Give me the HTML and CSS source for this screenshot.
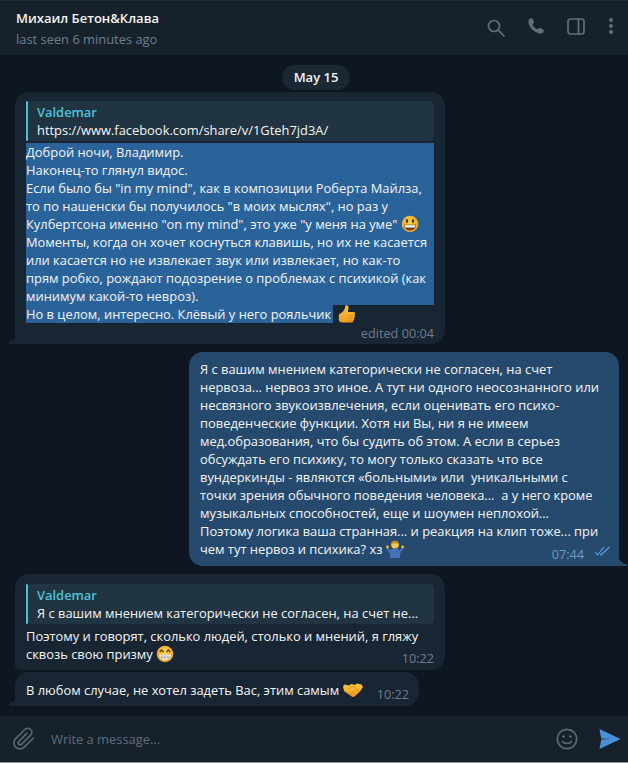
FILE: index.html
```html
<!DOCTYPE html>
<html lang="en">

<head>
    <meta charset="UTF-8">
    <meta name="viewport" content="width=device-width, initial-scale=1.0">
    <title>Михаил Бетон&amp;Клава</title>
    <link rel="stylesheet" href="styles.css">
</head>

<body>
    <svg class="defs" width="0" height="0">
        <defs>
            <radialGradient id="faceYellow" cx="50%" cy="40%" r="60%">
                <stop offset="0" stop-color="#fbd750"/>
                <stop offset="1" stop-color="#ec9c22"/>
            </radialGradient>
            <linearGradient id="handYellow" x1="0" y1="0" x2="0" y2="1">
                <stop offset="0" stop-color="#fcc93f"/>
                <stop offset="1" stop-color="#ee9a1e"/>
            </linearGradient>
        </defs>
    </svg>
    <div class="app">
        <header class="topBar">
            <div class="peer">
                <div class="peerName">Михаил Бетон&amp;Клава</div>
                <div class="peerStatus">last seen 6 minutes ago</div>
            </div>
            <div class="topIcons">
                <svg class="icon" width="24" height="24" viewBox="0 0 24 24"><circle cx="10" cy="10" r="5.500"/><path d="M14.200 14.200l5.800 5.800"/></svg>
                <svg class="icon fill" width="24" height="24" viewBox="0 0 24 24"><path d="M6 2.500c1.100-.7 2.300-.3 2.800.8l1 2.300c.3.700.1 1.400-.4 1.900l-1 1c.8 2 2.500 3.800 4.700 4.800l1.100-.9c.6-.5 1.300-.6 2-.3l2.500 1.100c1.100.5 1.400 1.800.7 2.700-.9 1.300-2.500 2-4.100 1.600C10.300 16.300 5.800 12 4.600 7.300 4.200 5.300 4.700 3.500 6 2.500z"/></svg>
                <svg class="icon" width="24" height="24" viewBox="0 0 24 24"><rect x="4" y="3" width="16" height="15" rx="2.500"/><path d="M14.500 3v15"/></svg>
                <svg class="icon fill dots" width="8" height="24" viewBox="0 0 8 24"><circle cx="4" cy="4" r="2"/><circle cx="4" cy="10" r="2"/><circle cx="4" cy="16" r="2"/></svg>
            </div>
        </header>

        <main class="history">
            <div class="dateRow"><span class="datePill">May 15</span></div>

            <div class="msg in tail first">
                <div class="reply">
                    <div class="replyName">Valdemar</div>
                    <div class="replyText">https://www.facebook.com/share/v/1Gteh7jd3A/</div>
                </div>
                <div class="msgText selBlock">Доброй ночи, Владимир.
Наконец-то глянул видос.
Если было бы "in my mind", как в композиции Роберта Майлза,
то по нашенски бы получилось "в моих мыслях", но раз у
Кулбертсона именно "on my mind", это уже "у меня на уме" <svg class="emoji" viewBox="0 0 18 18"><circle cx="9" cy="9" r="8.300" fill="url(#faceYellow)"/><ellipse cx="6" cy="6" rx="1.200" ry="1.900" fill="#5b3a12"/><ellipse cx="12" cy="6" rx="1.200" ry="1.900" fill="#5b3a12"/><path d="M3 9.800h12c0 3.600-2.700 5.600-6 5.600s-6-2-6-5.600z" fill="#6b3f14"/><path d="M3.500 10.200h11l-.6 2.200H4.100z" fill="#fff"/></svg>
Моменты, когда он хочет коснуться клавишь, но их не касается
или касается но не извлекает звук или извлекает, но как-то
прям робко, рождают подозрение о проблемах с психикой (как
минимум какой-то невроз).</div>
                <div class="msgLine"><span class="sel">Но в целом, интересно. Клёвый у него рояльчик</span><svg class="emoji thumb" viewBox="0 0 18 18"><path d="M7.500 .5c1.400-.5 3 .3 3 2.200 0 1.500-.4 2.800-.7 4.300h5.500c2 0 2.300 2.300 1 3 .9.700.8 2.200-.2 2.700.6.900.2 2.100-.8 2.400.3 1.200-.4 2.400-1.800 2.400H4.500C2 17.500.8 16.500.8 14.500v-3.300c0-2 1-2.800 2.400-3.300 2.300-1.200 4-4 4.300-7.400z" fill="url(#handYellow)"/><path d="M10 10.500h5M10 13h5M10 15.500h4" stroke="#d98a17" stroke-width=".7"/></svg></div>
                <div class="msgFoot"><span class="msgMeta">edited 00:04</span></div>
            </div>

            <div class="msg out">
                <div class="msgText">Я с вашим мнением категорически не согласен, на счет
нервоза... нервоз это иное. А тут ни одного неосознанного или
несвязного звукоизвлечения, если оценивать его психо-
поведенческие функции. Хотя ни Вы, ни я не имеем
мед.образования, что бы судить об этом. А если в серьез
обсуждать его психику, то могу только сказать что все
вундеркинды - являются «больными» или  уникальными с
точки зрения обычного поведения человека...  а у него кроме
музыкальных способностей, еще и шоумен неплохой...
Поэтому логика ваша странная... и реакция на клип тоже... при</div>
                <div class="msgFoot">
                    <span class="msgText">чем тут нервоз и психика? хз <svg class="emoji" viewBox="0 0 18 18"><path d="M4 18v-6c0-2 1.500-3.500 5-3.500s5 1.500 5 3.500v6z" fill="#4272b8"/><path d="M1.500 7.500l3.500 3.500-1 2.500L.5 9zM16.500 7.500L13 11l1 2.500L17.500 9z" fill="#4272b8"/><circle cx="1.400" cy="7" r="1.400" fill="#f5be3c"/><circle cx="16.600" cy="7" r="1.400" fill="#f5be3c"/><circle cx="9" cy="4.800" r="3.800" fill="#f8c93f"/><path d="M5.200 4.300C5.200-.6 12.800-.6 12.800 4.300c-2.200-1.300-5.400-1.300-7.600 0z" fill="#c98f1c"/></svg></span>
                    <span class="msgMeta">07:44<svg class="checks" width="18" height="12" viewBox="0 0 18 12"><path d="M1 7l2.500 3L10 2M6 9l1 1L15.500 2"/></svg></span>
                </div>
            </div>

            <div class="msg in second">
                <div class="reply">
                    <div class="replyName">Valdemar</div>
                    <div class="replyText">Я с вашим мнением категорически не согласен, на счет не...</div>
                </div>
                <div class="msgText">Поэтому и говорят, сколько людей, столько и мнений, я гляжу</div>
                <div class="msgFoot">
                    <span class="msgText">сквозь свою призму <svg class="emoji" viewBox="0 0 18 18"><circle cx="9" cy="9" r="8.300" fill="url(#faceYellow)"/><path d="M3.700 7.200l2-2.200 2 2.200M10.300 7.200l2-2.200 2 2.200" fill="none" stroke="#5b3a12" stroke-width="1.200"/><path d="M3 9.500h12c0 3.800-2.700 5.800-6 5.800s-6-2-6-5.800z" fill="#f1f1ee"/><path d="M3.200 12.200h11.600M6 9.500v5.200M9 9.500v5.800M12 9.500v5.200" stroke="#9a8d7c" stroke-width=".6"/></svg></span>
                    <span class="msgMeta">10:22</span>
                </div>
            </div>

            <div class="msg in tail last">
                <div class="msgFoot">
                    <span class="msgText">В любом случае, не хотел задеть Вас, этим самым <svg class="emoji shake" viewBox="0 0 20 14"><path d="M0 3.500l1.500-2L6 2.500 8.500 1 12 2l2-1.500 4.500 1L20 4l-3 4.500-5.500 5-2 .5-5-3.500L1 8z" fill="url(#handYellow)"/><path d="M6 6l3-2.500 2.500.5 4 4.500M9 8l2.500 2.500M7 10l2 2" fill="none" stroke="#cf8412" stroke-width=".8"/></svg></span>
                    <span class="msgMeta">10:22</span>
                </div>
            </div>
        </main>

        <footer class="inputBar">
            <svg class="icon attach" width="24" height="24" viewBox="0 0 24 24"><path d="M21.400 11l-9.200 9.200a6 6 0 0 1-8.500-8.500l9.200-9.200a4 4 0 0 1 5.700 5.700l-9.200 9.200a2 2 0 0 1-2.800-2.800l8.500-8.500"/></svg>
            <div class="inputText">Write a message...</div>
            <svg class="icon" width="24" height="24" viewBox="0 0 24 24"><circle cx="12" cy="12" r="9.700"/><circle class="dot" cx="8.500" cy="9.500" r="1.200"/><circle class="dot" cx="15.500" cy="9.500" r="1.200"/><path d="M7.500 14.500c1.500 2.600 7.500 2.600 9 0"/></svg>
            <svg class="send" width="24" height="24" viewBox="0 0 24 24"><path d="M1.500 2l21 10-21 10 1.700-9.400L13 12 3.200 11.400z"/></svg>
        </footer>
    </div>
</body>

</html>
```

FILE: styles.css
```css
* {
    box-sizing: border-box;
}

html,
body {
    margin: 0;
    padding: 0;
    background: #0e1621;
}

.defs {
    display: block;
    height: 0;
}

.app {
    width: 628px;
    height: 763px;
    display: flex;
    flex-direction: column;
    overflow: hidden;
    font-family: "Open Sans", sans-serif;
    font-size: 12.900px;
    line-height: 18px;
    color: #f5f5f5;
    border-top: 1px solid #232c3a;
    border-bottom: 1px solid #8a8f96;
}

.topBar {
    height: 54px;
    flex: none;
    display: flex;
    align-items: center;
    justify-content: space-between;
    padding: 0 13px 0 16px;
    background: #17212b;
}

.peerName {
    font-size: 13px;
    font-weight: 600;
    line-height: 18px;
}

.peerStatus {
    margin-top: 3px;
    color: #6d7f8f;
    line-height: 18px;
}

.topIcons {
    display: flex;
    align-items: center;
    gap: 16px;
}

.dots {
    margin-left: 3px;
}

.icon {
    flex: none;
    fill: none;
    stroke: #626f7b;
    stroke-width: 1.700;
    stroke-linecap: round;
    stroke-linejoin: round;
}

.icon.fill {
    fill: #626f7b;
    stroke: none;
}

.icon .dot {
    fill: #626f7b;
    stroke: none;
}

.history {
    flex: 1;
    padding: 10px 0 0;
    display: flex;
    flex-direction: column;
}

.dateRow {
    display: flex;
    justify-content: center;
    height: 27px;
    padding-left: 4px;
}

.datePill {
    height: 25px;
    padding: 0 12px;
    border-radius: 13px;
    background: #1b2733;
    font-weight: 600;
    font-size: 13px;
    line-height: 25px;
}

.msg {
    position: relative;
    padding: 9px 11px 3px;
    border-radius: 14px;
    background: #182533;
}

.msg.in {
    margin-left: 15px;
    align-self: flex-start;
    width: 430px;
}

.msg.out {
    margin-left: 189px;
    margin-top: 8px;
    width: 430px;
    padding-top: 8px;
    padding-bottom: 8px;
    padding-right: 7px;
    background: #264a6e;
    border-bottom-right-radius: 0;
}

.msg.out::after {
    content: "";
    position: absolute;
    right: -8px;
    bottom: 0;
    width: 8px;
    height: 10px;
    background: radial-gradient(circle at 100% 0, transparent 8px, #264a6e 8.500px);
}

.msg.tail {
    border-bottom-left-radius: 0;
}

.msg.tail::after {
    content: "";
    position: absolute;
    left: -6px;
    bottom: 0;
    width: 6px;
    height: 9px;
    background: radial-gradient(circle at 0 0, transparent 6px, #182533 6.500px);
}

.msg.second {
    margin-top: 8px;
    padding-top: 10px;
    padding-bottom: 7px;
    border-bottom-left-radius: 5px;
}

.msg.last {
    margin-top: 2px;
    width: 404px;
    padding: 9px 10px 7px 11px;
}

.reply {
    position: relative;
    height: 40px;
    padding: 2px 8px 0 11px;
    border-radius: 5px;
    background: #203442;
    margin-bottom: 2px;
}

.reply::before {
    content: "";
    position: absolute;
    left: 0;
    top: 0;
    bottom: 0;
    width: 2px;
    border-radius: 2px;
    background: #4cc3d9;
}

.msg.second .reply {
    margin-bottom: 3px;
}

.replyName {
    color: #4cc3d9;
    font-weight: 600;
}

.replyText {
    white-space: nowrap;
    overflow: hidden;
}

.msgText {
    white-space: pre-wrap;
}

.selBlock {
    background: #2a6399;
}

.msgLine {
    display: flex;
    align-items: flex-start;
    height: 18px;
}

.sel {
    display: block;
    height: 18px;
    padding-right: 2px;
    background: #2a6399;
}

.msgFoot {
    display: flex;
    justify-content: space-between;
    align-items: flex-start;
    height: 18px;
}

.msg.first .msgFoot {
    justify-content: flex-end;
    height: 16px;
    margin-top: 2px;
}

.emoji {
    width: 18px;
    height: 18px;
    vertical-align: -4px;
}

.thumb {
    flex: none;
    margin-left: 5px;
}

.shake {
    width: 20px;
    height: 14px;
    vertical-align: -2px;
}

.msgMeta {
    display: flex;
    align-items: center;
    gap: 10px;
    margin-top: 5px;
    font-size: 12.700px;
    line-height: 16px;
    color: #6d7f8f;
}

.msg.first .msgMeta {
    margin-top: 0;
}

.msg.out .msgMeta {
    color: #6a9bc8;
    margin-top: 6px;
}

.checks {
    fill: none;
    stroke: #5fa2de;
    stroke-width: 1.100;
    margin-top: -6px;
}

.inputBar {
    height: 46px;
    flex: none;
    display: flex;
    align-items: center;
    padding: 0 6px 0 12px;
    background: #17212b;
}

.inputBar .icon {
    stroke: #5a6672;
}

.inputText {
    flex: 1;
    margin-left: 15px;
    color: #5f6e7b;
}

.send {
    flex: none;
    margin-left: 19px;
    fill: #4a90d9;
}
```
